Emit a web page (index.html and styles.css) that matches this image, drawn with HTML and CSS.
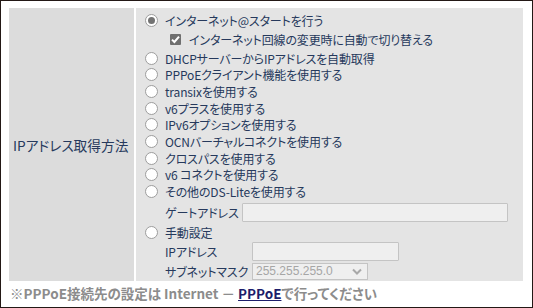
FILE: index.html
```html
<!DOCTYPE html>
<html lang="ja">
<head>
  <meta charset="UTF-8" />
  <title>IPアドレス取得方法</title>
  <link rel="stylesheet" href="styles.css">
</head>
<body>
  <div class="frame">
    <div class="setting-table">
      <div class="label-cell">IPアドレス取得方法</div>
      <div class="value-cell">
        <div class="opt"><span class="radio checked"></span>インターネット@スタートを行う</div>
        <div class="opt sub"><span class="check"><svg width="9" height="9" viewBox="0 0 9 9"><path d="M1 4.6 L3.4 7 L8 1.6" fill="none" stroke="#fff" stroke-width="2"/></svg></span>インターネット回線の変更時に自動で切り替える</div>
        <div class="opt"><span class="radio"></span>DHCPサーバーからIPアドレスを自動取得</div>
        <div class="opt"><span class="radio"></span>PPPoEクライアント機能を使用する</div>
        <div class="opt"><span class="radio"></span>transixを使用する</div>
        <div class="opt"><span class="radio"></span>v6プラスを使用する</div>
        <div class="opt"><span class="radio"></span>IPv6オプションを使用する</div>
        <div class="opt"><span class="radio"></span>OCNバーチャルコネクトを使用する</div>
        <div class="opt"><span class="radio"></span>クロスパスを使用する</div>
        <div class="opt"><span class="radio"></span>v6 コネクトを使用する</div>
        <div class="opt"><span class="radio"></span>その他のDS-Liteを使用する</div>
        <div class="field-row">
          <span class="field-label gw-label">ゲートアドレス</span>
          <input class="text-box gw" type="text">
        </div>
        <div class="opt manual"><span class="radio"></span>手動設定</div>
        <div class="manual-grid">
          <span class="field-label">IPアドレス</span>
          <input class="text-box ip" type="text">
          <span class="field-label">サブネットマスク</span>
          <div class="select-box">
            <span>255.255.255.0</span>
            <svg width="10" height="7" viewBox="0 0 10 7"><path d="M1 1.5 L5 5.5 L9 1.5" fill="none" stroke="#a8a8a8" stroke-width="2"/></svg>
          </div>
        </div>
      </div>
    </div>
    <p class="note">※PPPoE接続先の設定は Internet － <a href="#">PPPoE</a>で行ってください</p>
  </div>
</body>
</html>
```

FILE: styles.css
```css
html, body {
  margin: 0;
  padding: 0;
}
body {
  font-family: "Noto Sans CJK JP", "Noto Sans", sans-serif;
  font-size: 12px;
  font-feature-settings: "palt";
  color: #26395c;
  background: #fff;
}
.frame {
  box-sizing: border-box;
  width: 533px;
  height: 308px;
  border: 1px solid #231815;
  padding: 7px 9px 0 8px;
}
.setting-table {
  display: flex;
  gap: 2px;
  height: 273px;
}
.label-cell {
  width: 121px;
  padding-left: 4px;
  background: #dcdcdc;
  display: flex;
  align-items: center;
  font-size: 13.7px;
}
.value-cell {
  flex: 1;
  background: #e4e4e4;
  padding: 4px 0 0 9px;
  letter-spacing: -0.15px;
}
.opt {
  display: flex;
  align-items: center;
  height: 16.7px;
  white-space: nowrap;
}
.opt.sub {
  height: 21px;
  padding-left: 25px;
}
.opt.manual {
  margin-top: 2px;
}
.radio {
  box-sizing: border-box;
  width: 13px;
  height: 13px;
  border: 1px solid #9d9d9d;
  border-radius: 50%;
  background: #fff;
  margin-right: 7px;
  display: flex;
  align-items: center;
  justify-content: center;
}
.radio.checked::after {
  content: "";
  width: 7px;
  height: 7px;
  border-radius: 50%;
  background: #737373;
}
.check {
  box-sizing: border-box;
  width: 11px;
  height: 11px;
  background: #6f6f6f;
  border-radius: 1px;
  margin-right: 8px;
  display: flex;
  align-items: center;
  justify-content: center;
}
.field-row {
  display: flex;
  align-items: center;
  height: 19px;
  padding-left: 20px;
  margin-top: 3px;
}
.field-label {
  color: #26395c;
  white-space: nowrap;
}
.gw-label {
  width: 71px;
  margin-right: 6px;
}
.text-box {
  box-sizing: border-box;
  height: 19px;
  border: 1px solid #c4c4c4;
  background: #efefef;
  border-radius: 1px;
  margin: 0;
  padding: 0 3px;
}
.text-box.gw {
  width: 266px;
}
.text-box.ip {
  width: 147px;
}
.manual-grid {
  display: grid;
  grid-template-columns: 81px auto;
  column-gap: 6px;
  justify-content: start;
  align-items: center;
  row-gap: 2px;
  padding-left: 20px;
  margin-top: 1px;
}
.select-box {
  box-sizing: border-box;
  width: 116px;
  height: 17px;
  border: 1px solid #c4c4c4;
  background: #efefef;
  color: #a6a6a6;
  display: flex;
  align-items: center;
  justify-content: space-between;
  padding: 0 5px 0 3px;
  font-family: "Liberation Sans", Arial, sans-serif;
  font-size: 12px;
  letter-spacing: 0;
}
.note {
  margin: 3px 0 0 1px;
  line-height: 18px;
  color: #8c8c8c;
  font-weight: bold;
  font-size: 13.5px;
  white-space: nowrap;
}
.note a {
  color: #1d1d6b;
  text-decoration: underline;
}
```
